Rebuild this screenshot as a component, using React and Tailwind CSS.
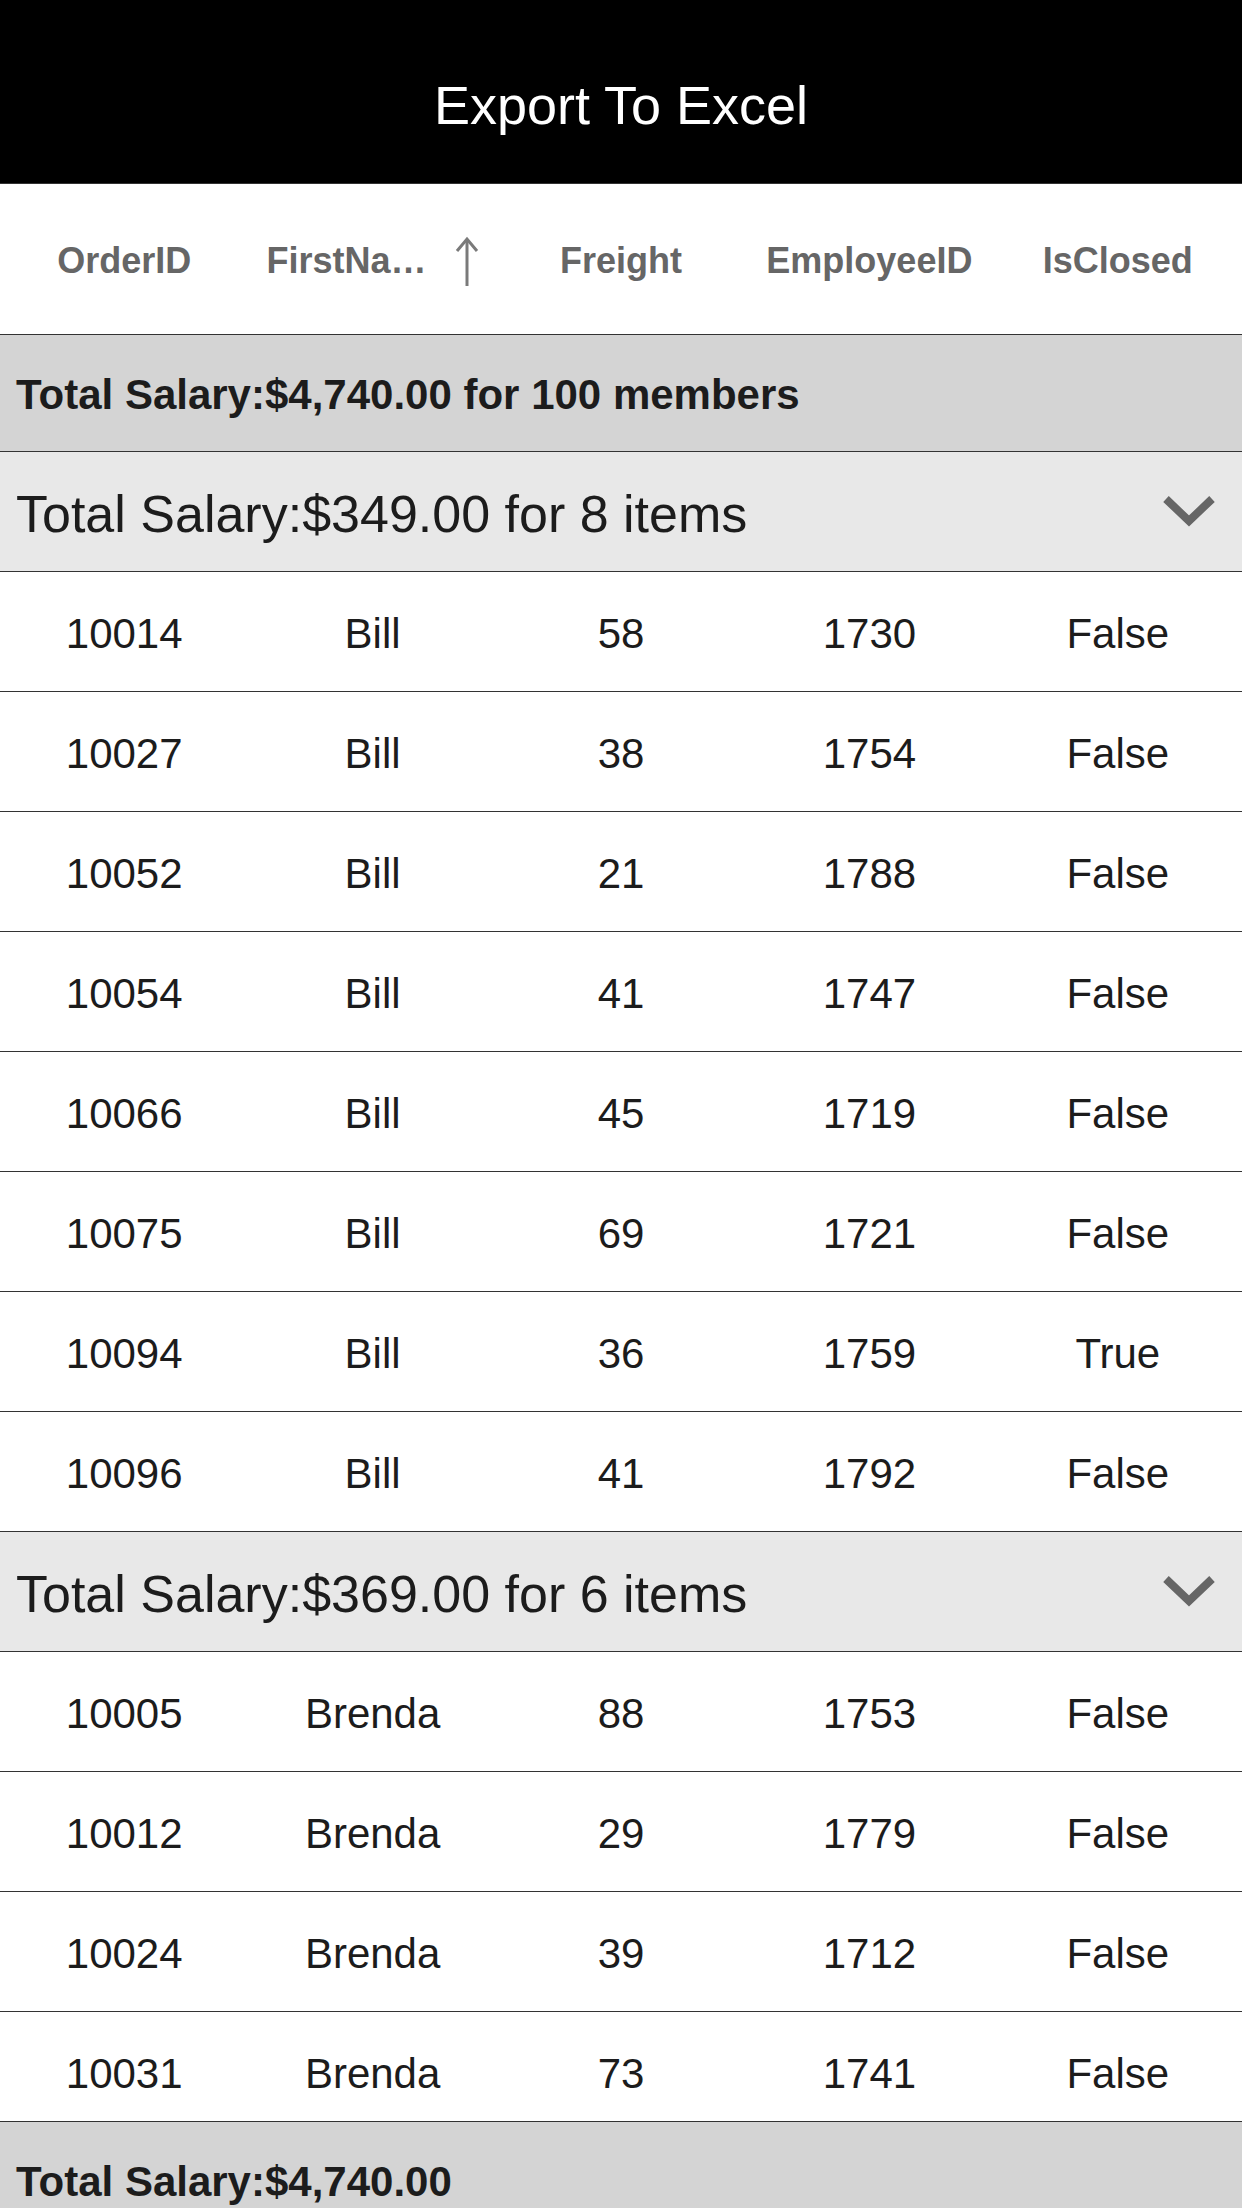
import React from "react";

const groups = [
  {
    caption: "Total Salary:$349.00 for 8 items",
    name: "Bill",
    rows: [
      ["10014", "58", "1730", "False"],
      ["10027", "38", "1754", "False"],
      ["10052", "21", "1788", "False"],
      ["10054", "41", "1747", "False"],
      ["10066", "45", "1719", "False"],
      ["10075", "69", "1721", "False"],
      ["10094", "36", "1759", "True"],
      ["10096", "41", "1792", "False"],
    ],
  },
  {
    caption: "Total Salary:$369.00 for 6 items",
    name: "Brenda",
    rows: [
      ["10005", "88", "1753", "False"],
      ["10012", "29", "1779", "False"],
      ["10024", "39", "1712", "False"],
      ["10031", "73", "1741", "False"],
    ],
  },
];

const SortArrow = () => (
  <svg width="24" height="50" viewBox="0 0 24 50" fill="none">
    <path d="M12 3 L12 50" stroke="#7a7a7a" strokeWidth="3" />
    <path d="M2 15 L12 3 L22 15" stroke="#7a7a7a" strokeWidth="3" />
  </svg>
);

const Chevron = () => (
  <svg width="54" height="34" viewBox="0 0 54 34" fill="none">
    <path
      d="M4 4 L27 26 L50 4"
      stroke="#666666"
      strokeWidth="8"
      strokeLinejoin="miter"
    />
  </svg>
);

const GroupHeader = ({ text }) => (
  <div className="flex h-[120px] items-center justify-between border-b border-[#333] bg-[#e8e8e8] pl-[16px] pr-[26px]">
    <span className="pt-[5px] text-[52px] leading-none text-[#1c1c1c]">{text}</span>
    <Chevron />
  </div>
);

const Row = ({ id, name, freight, emp, closed }) => (
  <div className="grid h-[120px] grid-cols-5 items-center border-b border-[#333] bg-white pt-[5px] text-center text-[42px] leading-none text-[#1c1c1c]">
    <span>{id}</span>
    <span>{name}</span>
    <span>{freight}</span>
    <span>{emp}</span>
    <span>{closed}</span>
  </div>
);

export default function App() {
  return (
    <div
      className="relative h-[2208px] w-[1242px] overflow-hidden bg-white"
      style={{ fontFamily: '"Liberation Sans", Arial, sans-serif' }}
    >
      <div className="h-[184px] border-b border-[#333] bg-black pt-[78px] text-center">
        <span className="text-[54px] leading-none text-white">Export To Excel</span>
      </div>

      <div className="grid h-[151px] grid-cols-5 items-center border-b border-[#333] pt-[3px] text-center text-[36px] font-bold leading-none text-[#666]">
        <span>OrderID</span>
        <div className="flex items-center justify-center gap-[28px]">
          <span>FirstNa…</span>
          <SortArrow />
        </div>
        <span>Freight</span>
        <span>EmployeeID</span>
        <span>IsClosed</span>
      </div>

      <div className="flex h-[117px] items-center border-b border-[#333] bg-[#d4d4d4] pl-[16px] pt-[3px]">
        <span className="text-[42px] font-bold leading-none text-[#1c1c1c]">
          Total Salary:$4,740.00 for 100 members
        </span>
      </div>

      {groups.map((g) => (
        <div key={g.caption}>
          <GroupHeader text={g.caption} />
          {g.rows.map((r) => (
            <Row
              key={r[0]}
              id={r[0]}
              name={g.name}
              freight={r[1]}
              emp={r[2]}
              closed={r[3]}
            />
          ))}
        </div>
      ))}

      <div className="absolute left-0 right-0 top-[2121px] flex h-[117px] items-center border-t border-[#333] bg-[#d4d4d4] pl-[16px] pt-[4px]">
        <span className="text-[42px] font-bold leading-none text-[#1c1c1c]">
          Total Salary:$4,740.00
        </span>
      </div>
    </div>
  );
}
